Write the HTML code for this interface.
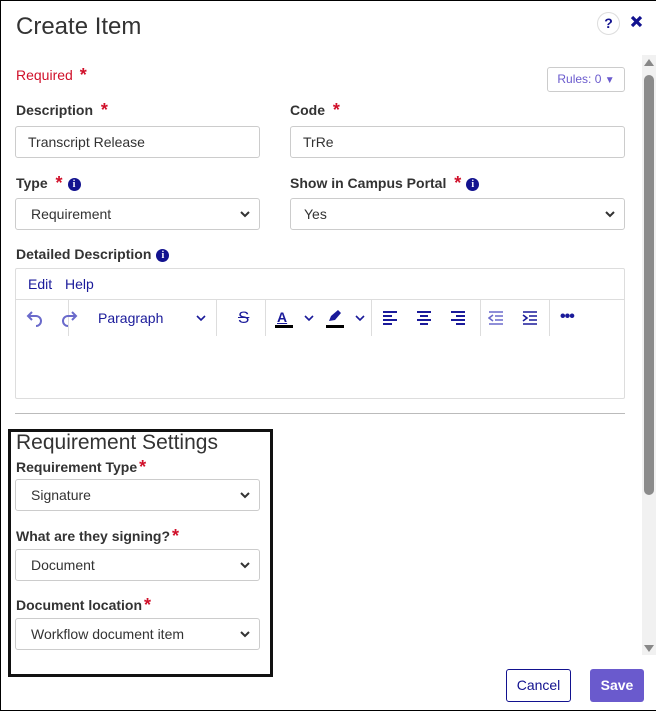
<!DOCTYPE html>
<html><head><style>
*{box-sizing:border-box;margin:0;padding:0}
body{width:656px;height:711px;overflow:hidden;background:#fff;font-family:"Liberation Sans",Arial,sans-serif;position:relative}
.frame{position:absolute;left:0;top:0;width:656px;height:711px;border:1px solid #000;border-right:none}
.a{position:absolute}
.lbl{position:absolute;font-size:14px;font-weight:bold;color:#333}
.st{color:#d0102a;font-weight:bold;margin-left:4px;font-size:18px;line-height:10px;vertical-align:-1px}
.in{position:absolute;height:32px;border:1px solid #ccc;border-radius:3px;font-size:14px;color:#333;padding:7px 12px;line-height:16px}
.sel{padding-left:15px}
.chev{position:absolute;right:8px;top:9px}
.info{display:inline-block;width:13px;height:13px;border-radius:50%;background:#12128f;color:#fff;font-size:10px;text-align:center;line-height:13px;font-weight:bold;vertical-align:1px;margin-left:5px;font-family:"Liberation Serif",serif}
.tb{position:absolute;top:300px;height:36px;border-right:1px solid #ddd}
</style></head><body>
<div class="frame"></div>
<div class="a" style="left:16px;top:13px;font-size:24px;color:#333">Create Item</div>
<div class="a" style="left:597px;top:12px;width:23px;height:23px;border:1px solid #ddd;border-radius:50%;text-align:center;font-size:14px;font-weight:bold;line-height:21px;color:#12128f">?</div>
<svg class="a" style="left:630px;top:15px" width="13" height="13" viewBox="0 0 13 13"><path d="M2 2l9 9M11 2l-9 9" stroke="#12128f" stroke-width="3.2"/></svg>
<div class="a" style="left:642px;top:55px;width:14px;height:600px;background:#f1f1f1"></div>
<div class="a" style="left:644px;top:59px;width:0;height:0;border-left:5px solid transparent;border-right:5px solid transparent;border-bottom:7px solid #888"></div>
<div class="a" style="left:644px;top:75px;width:10px;height:420px;background:#8b8b8b;border-radius:5px"></div>
<div class="a" style="left:644px;top:645px;width:0;height:0;border-left:5px solid transparent;border-right:5px solid transparent;border-top:7px solid #888"></div>

<div class="a" style="left:16px;top:67px;font-size:14px;color:#d0102a">Required <span class="st" style="margin-left:3px">*</span></div>
<div class="a" style="left:547px;top:67px;width:78px;height:25px;border:1px solid #ccc;border-radius:3px;font-size:12px;color:#6a5acd;text-align:center;line-height:23px">Rules: 0 <span style="font-size:10px">▼</span></div>

<div class="lbl" style="left:16px;top:102px">Description <span class="st">*</span></div>
<div class="in" style="left:15px;top:126px;width:245px">Transcript Release</div>
<div class="lbl" style="left:290px;top:102px">Code <span class="st">*</span></div>
<div class="in" style="left:290px;top:126px;width:335px">TrRe</div>

<div class="lbl" style="left:16px;top:175px">Type <span class="st">*</span><span class="info">i</span></div>
<div class="in sel" style="left:15px;top:198px;width:245px">Requirement<svg class="chev" width="12" height="12" viewBox="0 0 12 12"><path d="M2 4l4 4 4-4" stroke="#333" stroke-width="2" fill="none"/></svg></div>
<div class="lbl" style="left:290px;top:175px">Show in Campus Portal <span class="st">*</span><span class="info">i</span></div>
<div class="in sel" style="left:290px;top:198px;width:335px;padding-left:13px">Yes<svg class="chev" width="12" height="12" viewBox="0 0 12 12"><path d="M2 4l4 4 4-4" stroke="#333" stroke-width="2" fill="none"/></svg></div>

<div class="lbl" style="left:16px;top:246px">Detailed Description<span class="info">i</span></div>
<div class="a" style="left:15px;top:268px;width:610px;height:131px;border:1px solid #ddd;border-radius:2px"></div>
<div class="a" style="left:16px;top:299px;width:608px;height:1px;background:#ddd"></div>
<div class="a" style="left:28px;top:276px;font-size:14px;color:#1a1a9a">Edit</div>
<div class="a" style="left:65px;top:276px;font-size:14px;color:#1a1a9a">Help</div>
<div class="tb" style="left:16px;width:53px"></div>
<div class="tb" style="left:69px;width:148px"></div>
<div class="tb" style="left:217px;width:49px"></div>
<div class="tb" style="left:266px;width:106px"></div>
<div class="tb" style="left:372px;width:109px"></div>
<div class="tb" style="left:481px;width:69px"></div>
<svg class="a" style="left:26px;top:309px" width="18" height="18" viewBox="0 0 18 18"><path d="M6 3L2 7l4 4M2 7h8a5 5 0 010 10" stroke="#6a6acb" stroke-width="2" fill="none"/></svg>
<svg class="a" style="left:60px;top:309px" width="18" height="18" viewBox="0 0 18 18"><path d="M12 3l4 4-4 4M16 7H8a5 5 0 000 10" stroke="#6a6acb" stroke-width="2" fill="none"/></svg>
<div class="a" style="left:98px;top:310px;font-size:14px;color:#1a1a9a">Paragraph</div>
<svg class="a" style="left:195px;top:312px" width="12" height="12" viewBox="0 0 12 12"><path d="M2 4l4 4 4-4" stroke="#1a1a9a" stroke-width="1.6" fill="none"/></svg>
<div class="a" style="left:238px;top:308px;font-size:17px;color:#1a1a9a;text-decoration:line-through">S</div>
<div class="a" style="left:277px;top:309px;font-size:14px;color:#1a1a9a;font-weight:bold;text-decoration:underline">A</div>
<div class="a" style="left:275px;top:325px;width:18px;height:3px;background:#000"></div>
<svg class="a" style="left:303px;top:312px" width="12" height="12" viewBox="0 0 12 12"><path d="M2 4l4 4 4-4" stroke="#1a1a9a" stroke-width="1.6" fill="none"/></svg>
<svg class="a" style="left:326px;top:309px" width="16" height="14" viewBox="0 0 16 14"><path d="M3 12l2-5 7-6 3 3-6 7z" fill="#1a1a9a"/></svg>
<div class="a" style="left:326px;top:325px;width:18px;height:3px;background:#000"></div>
<svg class="a" style="left:354px;top:312px" width="12" height="12" viewBox="0 0 12 12"><path d="M2 4l4 4 4-4" stroke="#1a1a9a" stroke-width="1.6" fill="none"/></svg>
<svg class="a" style="left:382px;top:310px" width="16" height="15" viewBox="0 0 16 15"><path d="M1 2h14M1 6h9M1 10h14M1 14h9" stroke="#1a1a9a" stroke-width="2"/></svg>
<svg class="a" style="left:416px;top:310px" width="16" height="15" viewBox="0 0 16 15"><path d="M1 2h14M4 6h8M1 10h14M4 14h8" stroke="#1a1a9a" stroke-width="2"/></svg>
<svg class="a" style="left:450px;top:310px" width="16" height="15" viewBox="0 0 16 15"><path d="M1 2h14M6 6h9M1 10h14M6 14h9" stroke="#1a1a9a" stroke-width="2"/></svg>
<svg class="a" style="left:488px;top:310px" width="16" height="15" viewBox="0 0 16 15"><path d="M1 2h14M7 6h8M7 10h8M1 14h14M5 5L1 8l4 3" stroke="#6a6acb" stroke-width="1.6" fill="none"/></svg>
<svg class="a" style="left:522px;top:310px" width="16" height="15" viewBox="0 0 16 15"><path d="M1 2h14M7 6h8M7 10h8M1 14h14M1 5l4 3-4 3" stroke="#1a1a9a" stroke-width="1.6" fill="none"/></svg>
<div class="a" style="left:560px;top:308px;font-size:16px;font-weight:bold;color:#1a1a9a;letter-spacing:-1px">•••</div>

<div class="a" style="left:15px;top:413px;width:610px;height:1px;background:#bbb"></div>

<div class="a" style="left:8px;top:429px;width:265px;height:248px;border:3px solid #111"></div>
<div class="a" style="left:16px;top:431px;font-size:21px;color:#333">Requirement Settings</div>
<div class="lbl" style="left:16px;top:459px">Requirement Type<span class="st" style="margin-left:2px">*</span></div>
<div class="in sel" style="left:15px;top:479px;width:245px">Signature<svg class="chev" width="12" height="12" viewBox="0 0 12 12"><path d="M2 4l4 4 4-4" stroke="#333" stroke-width="2" fill="none"/></svg></div>
<div class="lbl" style="left:16px;top:528px">What are they signing?<span class="st" style="margin-left:2px">*</span></div>
<div class="in sel" style="left:15px;top:549px;width:245px">Document<svg class="chev" width="12" height="12" viewBox="0 0 12 12"><path d="M2 4l4 4 4-4" stroke="#333" stroke-width="2" fill="none"/></svg></div>
<div class="lbl" style="left:16px;top:597px">Document location<span class="st" style="margin-left:2px">*</span></div>
<div class="in sel" style="left:15px;top:618px;width:245px">Workflow document item<svg class="chev" width="12" height="12" viewBox="0 0 12 12"><path d="M2 4l4 4 4-4" stroke="#333" stroke-width="2" fill="none"/></svg></div>

<div class="a" style="left:506px;top:669px;width:65px;height:33px;border:1px solid #12128f;border-radius:3px;font-size:14px;color:#12128f;text-align:center;line-height:31px">Cancel</div>
<div class="a" style="left:590px;top:669px;width:54px;height:33px;background:#6a5acd;border-radius:3px;font-size:14px;color:#fff;text-align:center;line-height:33px;font-weight:bold">Save</div>
</body></html>
